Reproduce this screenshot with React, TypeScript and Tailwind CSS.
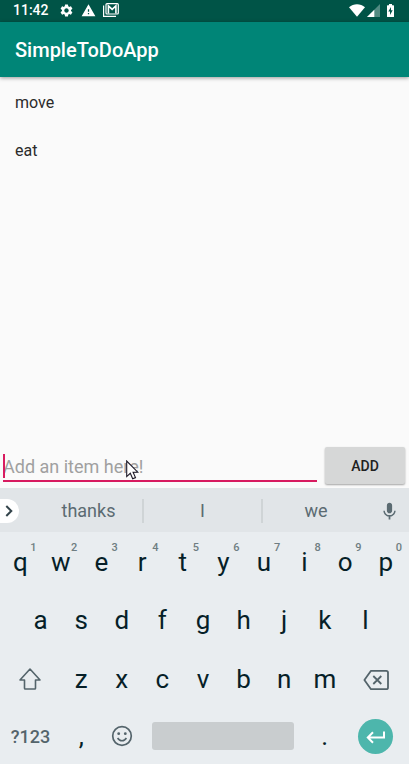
import React, { useState } from "react";
import { MdSettings, MdWarning, MdMic } from "react-icons/md";

const items = ["move", "eat"];
const topRow = ["q", "w", "e", "r", "t", "y", "u", "i", "o", "p"];
const homeRow = ["a", "s", "d", "f", "g", "h", "j", "k", "l"];
const bottomRow = ["z", "x", "c", "v", "b", "n", "m"];

function StatusBar() {
  return (
    <div className="flex h-[22px] items-center bg-[#005447] pr-[15px] pl-[13px] text-white">
      <span className="pb-0.5 text-sm font-medium">11:42</span>
      <MdSettings className="mb-0.5 ml-[10px] size-[15px]" />
      <MdWarning className="mb-0.5 ml-[7px] size-[15px]" />
      <svg viewBox="0 0 16 14" className="mb-0.5 ml-[7px] h-[14px] w-4" aria-hidden="true">
        <path d="M.6 2.5V13.4h12.4" fill="none" stroke="currentColor" strokeWidth="1.2" />
        <rect x="3" y=".7" width="12.3" height="10.3" rx="1" fill="none" stroke="currentColor" strokeWidth="1.2" />
        <path d="M5.4 10.5V2.8L9.15 6.3L12.9 2.8V10.5" fill="none" stroke="currentColor" strokeWidth="1.6" />
      </svg>
      <div className="mb-0.5 ml-auto flex items-center">
        <svg viewBox="0 0 16 13" className="h-[13px] w-4" aria-hidden="true">
          <path d="M0 3.3C4.5-.7 11.5-.7 16 3.3L8 12.8Z" fill="currentColor" />
        </svg>
        <svg viewBox="0 0 13 13" className="ml-0.5 h-[13px] w-[13px]" aria-hidden="true">
          <path d="M0 13L13 0V13Z" fill="currentColor" opacity=".32" />
          <path d="M0 13L7.3 5.7V13Z" fill="currentColor" />
        </svg>
        <svg viewBox="0 0 7 13" className="ml-[7px] h-[13px] w-[7px]" aria-hidden="true">
          <path d="M2 0h3v1.2h1.4q.6 0 .6.6v10.6q0 .6-.6.6H.6Q0 13 0 12.4V1.8q0-.6.6-.6H2Z" fill="currentColor" />
          <path d="M4 3L1.3 7.6H3V11L5.7 6.3H4Z" fill="#005447" />
        </svg>
      </div>
    </div>
  );
}

function LetterKey({ letter, hint }: { letter: string; hint?: string }) {
  return (
    <button type="button" className="relative col-span-2 flex items-center justify-center pt-0.5 text-[26px] text-[#061f28]">
      {letter}
      {hint && <span className="absolute top-[10px] right-1 text-[11px] leading-3 font-medium text-[#6f7d82]">{hint}</span>}
    </button>
  );
}

function Keyboard() {
  return (
    <section aria-label="Keyboard" className="bg-[#e9edf0] text-[#54646b]">
      <div className="flex h-11 items-center bg-[#e1e5e8] pt-0.5 text-lg leading-6 text-[#5b6b72]">
        <button type="button" aria-label="More" className="flex h-6 w-[19px] items-center justify-center rounded-r-full bg-white pr-0.5 text-[#33444b]">
          <svg viewBox="0 0 8 12" className="h-3 w-2" aria-hidden="true">
            <path d="M1.3 1L6.3 6L1.3 11" fill="none" stroke="currentColor" strokeWidth="2" />
          </svg>
        </button>
        <div className="ml-4 grid h-6 flex-1 grid-cols-[109px_1fr_106px]">
          <button type="button" className="flex items-center justify-center border-r-2 border-[#cfd4d6]">thanks</button>
          <button type="button" className="flex items-center justify-center border-r-2 border-[#cfd4d6]">I</button>
          <button type="button" className="flex items-center justify-center">we</button>
        </div>
        <button type="button" aria-label="Voice input" className="flex w-10 justify-center">
          <MdMic className="size-[21px]" />
        </button>
      </div>
      <div className="grid grid-cols-20 grid-rows-[58px_59px_58px_57px] pr-[3px]">
        {topRow.map((letter, i) => (
          <LetterKey key={letter} letter={letter} hint={String((i + 1) % 10)} />
        ))}
        <span />
        {homeRow.map((letter) => (
          <LetterKey key={letter} letter={letter} />
        ))}
        <span />
        <button type="button" aria-label="Shift" className="col-span-3 flex items-center justify-center pt-0.5">
          <svg viewBox="0 0 24 24" className="size-6" aria-hidden="true">
            <path d="M12 2L22 13H17.5V21.2Q17.5 22 16.7 22H7.3Q6.5 22 6.5 21.2V13H2Z" fill="none" stroke="currentColor" strokeWidth="1.6" strokeLinejoin="round" />
          </svg>
        </button>
        {bottomRow.map((letter) => (
          <LetterKey key={letter} letter={letter} />
        ))}
        <button type="button" aria-label="Backspace" className="col-span-3 flex items-center justify-center pt-1">
          <svg viewBox="0 0 26 22" className="h-[22px] w-[26px]" aria-hidden="true">
            <path d="M8 1.8H23.2Q25 1.8 25 3.6V18.4Q25 20.2 23.2 20.2H8L1.4 11Z" fill="none" stroke="currentColor" strokeWidth="1.8" strokeLinejoin="round" />
            <path d="M10.3 7L18.3 15M18.3 7L10.3 15" stroke="currentColor" strokeWidth="1.8" />
          </svg>
        </button>
        <button type="button" className="col-span-3 flex items-center justify-center pt-0.5 text-lg font-medium">?123</button>
        <LetterKey letter="," />
        <button type="button" aria-label="Emoji" className="col-span-2 flex items-center justify-center">
          <svg viewBox="0 0 22 22" className="size-[22px]" aria-hidden="true">
            <circle cx="11" cy="11" r="9.3" fill="none" stroke="currentColor" strokeWidth="1.7" />
            <circle cx="7.7" cy="8.7" r="1.4" fill="currentColor" />
            <circle cx="14.3" cy="8.7" r="1.4" fill="currentColor" />
            <path d="M6.6 13Q8.2 15.7 11 15.7T15.4 13" fill="none" stroke="currentColor" strokeWidth="1.6" />
          </svg>
        </button>
        <button type="button" aria-label="Space" className="col-span-8 flex items-center px-[10px]">
          <span className="h-7 w-full rounded-[3px] bg-[#c9cdcf]" />
        </button>
        <LetterKey letter="." />
        <button type="button" aria-label="Enter" className="col-span-3 flex items-center justify-center pt-0.5">
          <span className="flex size-[35px] items-center justify-center rounded-full bg-[#4db6ac] text-white">
            <svg viewBox="0 0 20 14" className="h-[14px] w-5" aria-hidden="true">
              <path d="M18 1.5V7.5H2M7 2.3L1.8 7.5L7 12.7" fill="none" stroke="currentColor" strokeWidth="2" />
            </svg>
          </span>
        </button>
      </div>
    </section>
  );
}

export default function App() {
  const [text, setText] = useState("");
  return (
    <div className="relative flex min-h-screen flex-col bg-[#fafafa] font-['Roboto',sans-serif]">
      <StatusBar />
      <header className="flex h-[55px] items-center bg-[#008577] px-[15px] text-white shadow-[0_1px_4px_rgba(0,0,0,0.4)]">
        <h1 className="text-xl font-medium">SimpleToDoApp</h1>
      </header>
      <ul className="flex-1 pt-0.5 text-base text-[#2b2b2b]">
        {items.map((item) => (
          <li key={item} className="flex h-12 items-center px-[15px]">{item}</li>
        ))}
      </ul>
      <form className="flex gap-2 pr-1 pb-1 pl-[3px]" onSubmit={(e) => e.preventDefault()}>
        <div className="relative flex flex-1">
          <input
            type="text"
            aria-label="New item"
            placeholder="Add an item here!"
            value={text}
            onChange={(e) => setText(e.target.value)}
            className="h-[35px] w-full min-w-0 border-b-2 border-[#d81b60] bg-transparent pt-1.5 text-lg text-[#2b2b2b] outline-none placeholder:text-[#a0a0a0]"
          />
          <span className="absolute top-[7px] left-0 h-6 w-0.5 bg-[#d81b60]" />
          <svg viewBox="0 0 13 20" className="absolute top-[13px] left-[123px] h-5 w-[13px]" aria-hidden="true">
            <path d="M.7 1V16.6L4.3 13.3L6.7 18.8L9.5 17.6L7.1 12.2H11.8Z" fill="#fff" stroke="#1c1826" strokeWidth="1.1" />
          </svg>
        </div>
        <button type="submit" className="h-[37px] w-20 rounded-[2px] bg-[#d6d7d7] text-sm font-medium text-[#212121] shadow-[0_1px_2px_rgba(0,0,0,0.35)]">
          ADD
        </button>
      </form>
      <Keyboard />
    </div>
  );
}
